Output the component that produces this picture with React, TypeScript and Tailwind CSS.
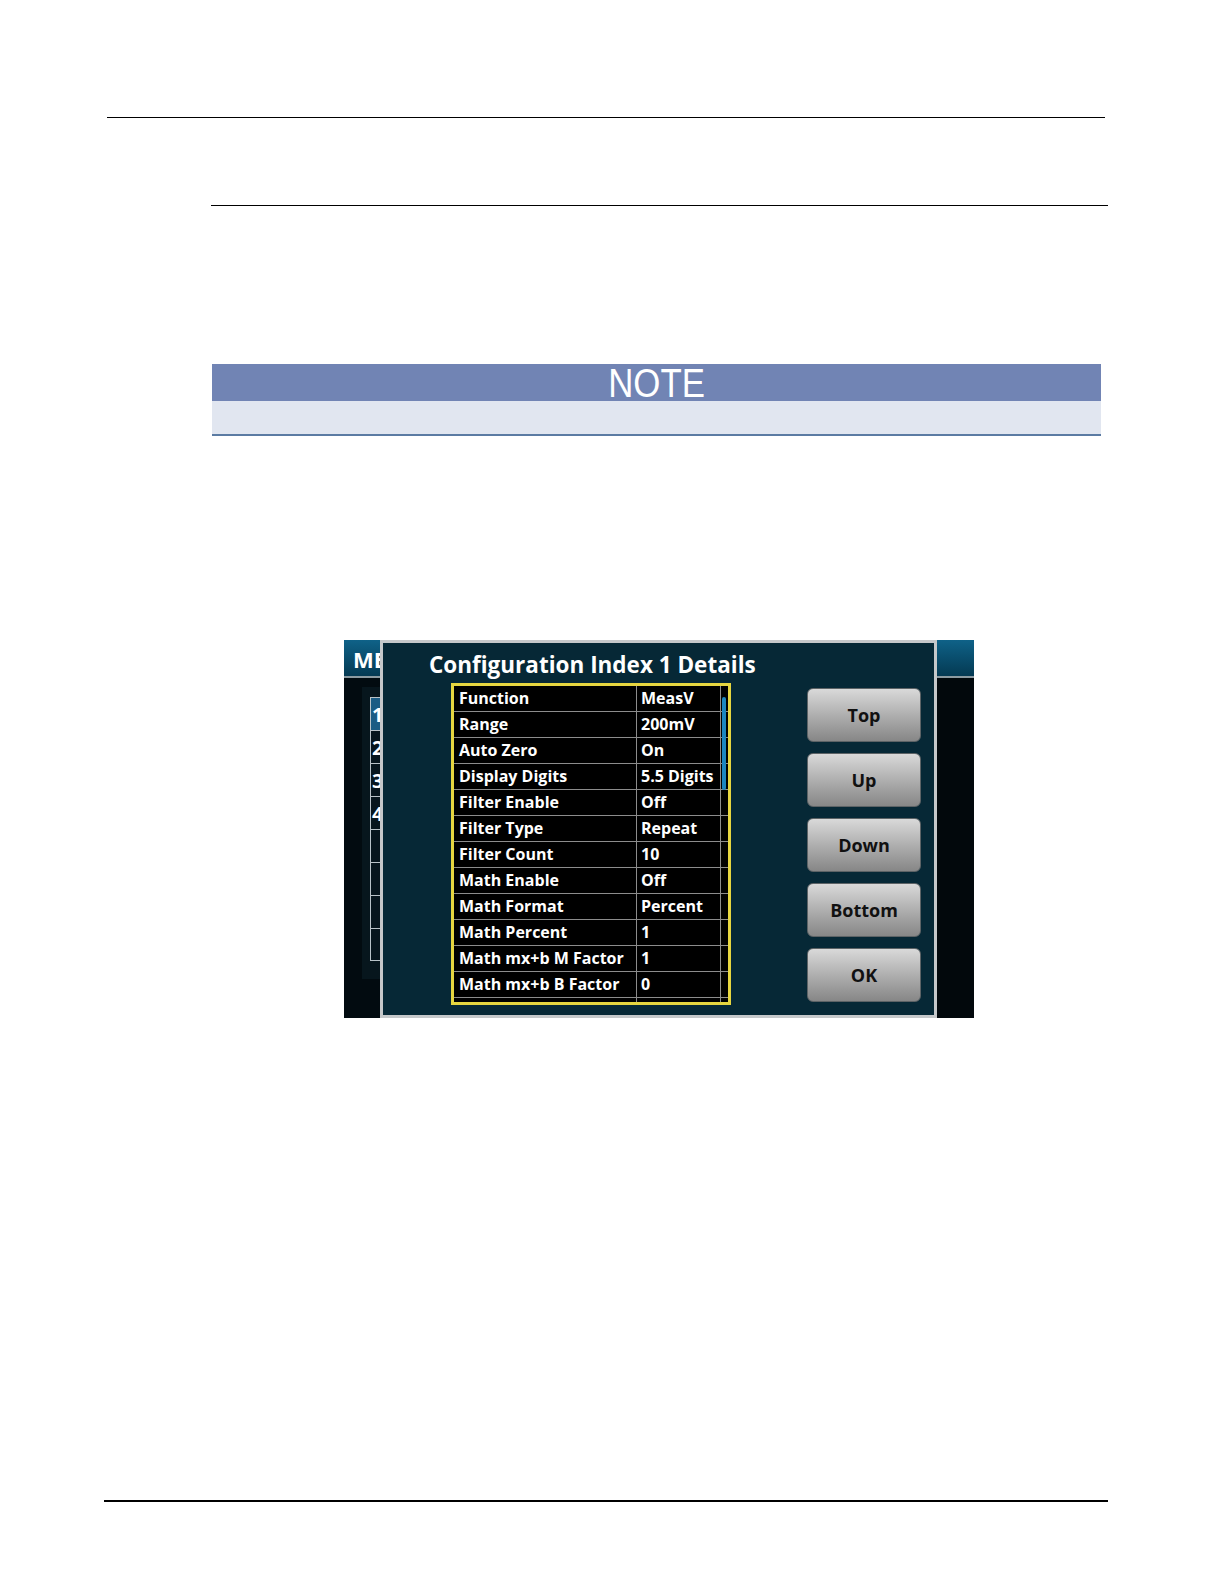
import React from 'react';

const rows: [string, string][] = [
  ['Function', 'MeasV'],
  ['Range', '200mV'],
  ['Auto Zero', 'On'],
  ['Display Digits', '5.5 Digits'],
  ['Filter Enable', 'Off'],
  ['Filter Type', 'Repeat'],
  ['Filter Count', '10'],
  ['Math Enable', 'Off'],
  ['Math Format', 'Percent'],
  ['Math Percent', '1'],
  ['Math mx+b M Factor', '1'],
  ['Math mx+b B Factor', '0'],
  ['', ''],
];

const buttons = ['Top', 'Up', 'Down', 'Bottom', 'OK'];

function SideList() {
  const items = ['1', '2', '3', '4', '', '', '', ''];
  return (
    <div className="mt-[9px] ml-[18px] h-[292px] bg-[#07161d] pt-[10px] pl-[8px]">
      {items.map((n, i) => (
        <div
          key={i}
          className={
            'h-[33px] border-l border-t border-[#b9c3c8] pl-[1px] text-[20px] font-bold leading-[33px] text-white ' +
            (i === 0 ? 'bg-[#1b5c84]' : '') +
            (i === items.length - 1 ? ' border-b' : '')
          }
        >
          {n}
        </div>
      ))}
    </div>
  );
}

function ConfigTable() {
  return (
    <div className="relative w-[280px] border-[3px] border-[#e6d640] bg-black">
      <div className="h-[316px] overflow-hidden">
        {rows.map(([k, v], i) => (
          <div key={i} className="flex h-[26px] border-b border-[#8c8c8c]">
            <div className="w-[182px] pl-[5px] text-[16px] leading-[25px] font-bold text-white">{k}</div>
            <div className="w-[84px] border-l border-[#8c8c8c] pl-[4px] text-[16px] leading-[25px] font-bold text-white">
              {v}
            </div>
            <div className="flex-1 border-l border-[#8c8c8c]" />
          </div>
        ))}
      </div>
      <div className="absolute right-[2px] top-[11px] h-[93px] w-[4px] rounded-sm bg-[#1b86c0]" />
    </div>
  );
}

function Screen() {
  return (
    <div className="flex h-[378px] w-[630px] font-['Open_Sans',sans-serif]">
      <div className="w-[36px] overflow-hidden bg-[#020b10]">
        <div className="h-[36px] bg-gradient-to-b from-[#0f6288] to-[#053a53] pl-[9px] text-[22px] font-bold leading-[38px] text-white whitespace-nowrap">
          ME
        </div>
        <div className="h-[2px] bg-[#8d9ba2]" />
        <SideList />
      </div>
      <div className="w-[557px] border-[3px] border-[#c5c8ca] bg-[#062836]">
        <div className="pl-[46px] pt-[7px] text-[22.5px] font-bold leading-[30px] text-white">
          Configuration Index 1 Details
        </div>
        <div className="mt-[3px] flex">
          <div className="ml-[68px]">
            <ConfigTable />
          </div>
          <div className="ml-[76px] mt-[5px] flex flex-col gap-[11px]">
            {buttons.map((b) => (
              <div
                key={b}
                className="flex h-[54px] w-[114px] items-center justify-center rounded-[6px] border border-[#5d6366] bg-gradient-to-b from-[#d9d9d9] to-[#878787] text-[18px] font-bold text-[#111]"
              >
                {b}
              </div>
            ))}
          </div>
        </div>
      </div>
      <div className="w-[37px] bg-[#02080c]">
        <div className="h-[36px] bg-gradient-to-b from-[#0f6288] to-[#053a53]" />
        <div className="h-[2px] bg-[#8d9ba2]" />
      </div>
    </div>
  );
}

export default function App() {
  return (
    <div className="flex h-[1584px] w-[1224px] flex-col bg-white">
      <div className="ml-[107px] mt-[117px] h-px w-[998px] bg-black" />
      <div className="ml-[211px] mt-[87px] h-px w-[897px] bg-black" />

      <div className="ml-[212px] mt-[158px] w-[889px]">
        <div className="flex h-[37px] justify-center bg-[#7184b4] font-['Liberation_Sans',sans-serif] text-[40px] leading-[39px] text-white">
          <span className="inline-block scale-x-[0.87]">NOTE</span>
        </div>
        <div className="h-[35px] border-b-2 border-[#5b7ba3] bg-[#e1e6f0]" />
      </div>

      <div className="ml-[344px] mt-[204px]">
        <Screen />
      </div>

      <div className="ml-[104px] mt-[482px] h-[2px] w-[1004px] bg-black" />
    </div>
  );
}
